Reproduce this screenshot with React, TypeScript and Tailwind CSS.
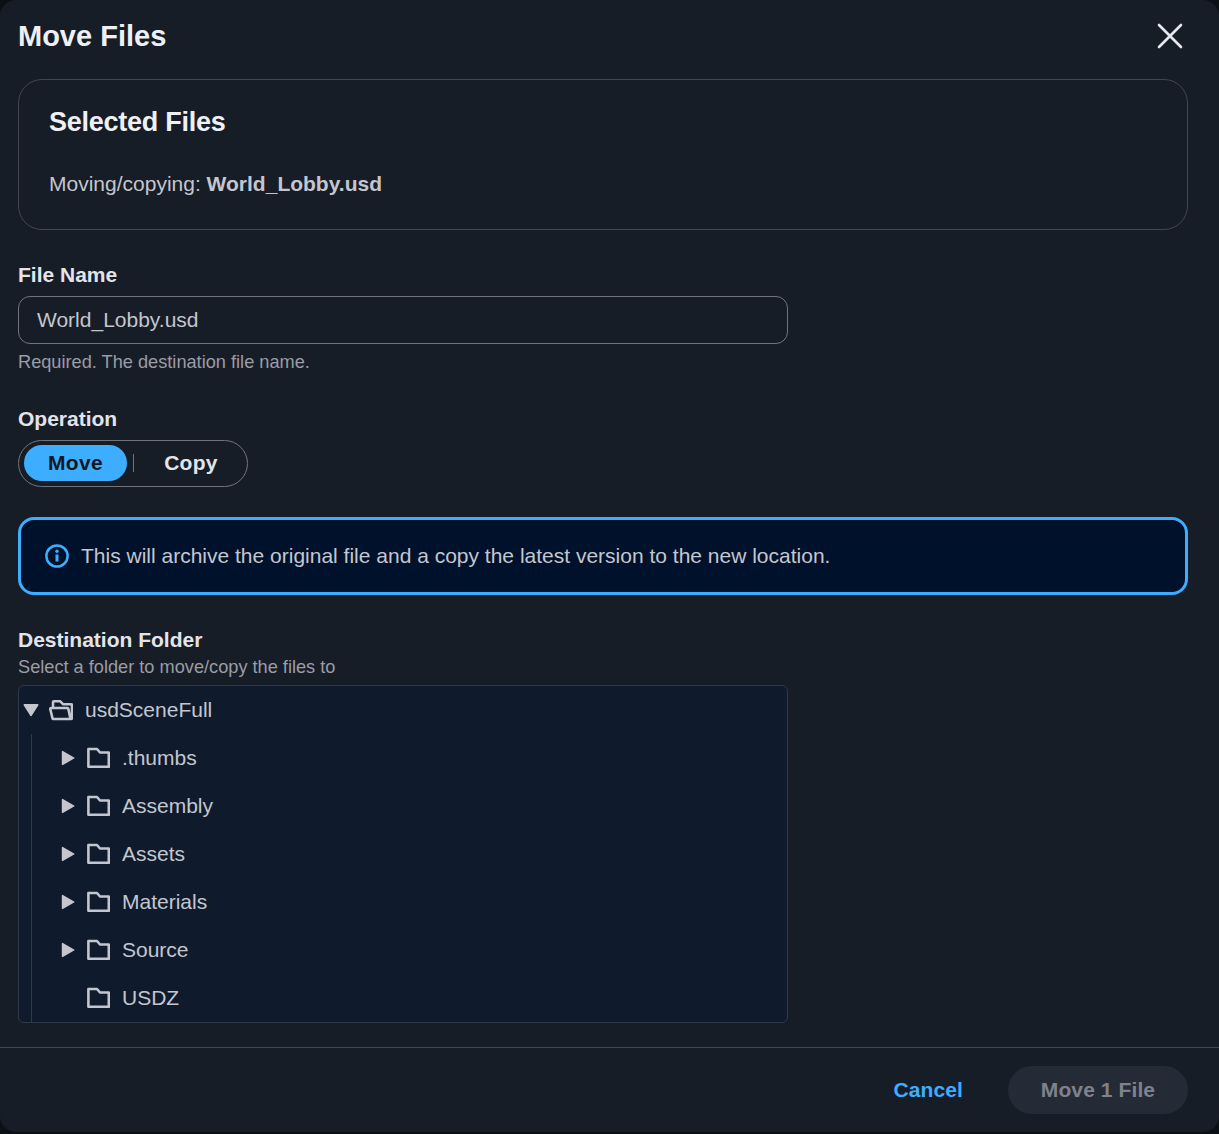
import React from "react";

function Folder() {
  return (
    <svg width="24" height="24" viewBox="0 0 24 24" fill="none" stroke="#c4c6cf" strokeWidth="2.600" strokeLinejoin="round" className="block shrink-0">
      <path d="M2.400 3H11L14 6.500H22.800V20.800H2.400z" />
    </svg>
  );
}

function FolderOpen() {
  return (
    <svg width="24" height="24" viewBox="0 0 24 24" fill="none" stroke="#c4c6cf" strokeWidth="2.600" strokeLinejoin="round" className="block shrink-0">
      <path d="M4 10V4.200a1 1 0 0 1 1-1h6l3 3h8a1 1 0 0 1 1 1V20a1 1 0 0 1-1 1H4.500a1 1 0 0 1-1-.8L1.300 11.300a1 1 0 0 1 1-1.300h16a1 1 0 0 1 1 .8L21.500 21" />
    </svg>
  );
}

function Row({ name, leaf }: { name: string; leaf?: boolean }) {
  return (
    <div className="h-12 flex items-center">
      <div className="w-[18px] ml-[40px] flex items-center justify-center">
        {!leaf && (
          <svg width="14" height="16" viewBox="0 0 14 16" className="block">
            <path d="M1.500 1.500L12.800 8L1.500 14.500z" fill="#c4c6cf" stroke="#c4c6cf" strokeWidth="1.400" strokeLinejoin="round" />
          </svg>
        )}
      </div>
      <div className="ml-[9px]"><Folder /></div>
      <span className="ml-[12px] text-[21px] leading-6 text-[#c4c6cf]">{name}</span>
    </div>
  );
}

export default function App() {
  return (
    <div className="w-[1219px] h-[1134px] bg-[#0b0f16] overflow-hidden font-['Liberation_Sans',Arial,sans-serif]">
      <div className="w-[1219px] h-[1132px] bg-[#171d27] rounded-[16px] flex flex-col">
        <div className="h-[71px] pl-[18px] pr-[35px] flex items-center justify-between">
          <h1 className="text-[29px] leading-9 font-bold text-[#eef0f6]">Move Files</h1>
          <svg width="28" height="28" viewBox="0 0 28 28" fill="none" stroke="#e6e7ee" strokeWidth="2.600" strokeLinecap="round">
            <path d="M3 3L25 25M25 3L3 25" />
          </svg>
        </div>
        <div className="flex-1 pl-[18px] pr-[31px] pt-[8px] flex flex-col">
          <div className="h-[151px] rounded-[24px] border border-[#43464f] pl-[30px] pt-[24px]">
            <h2 className="text-[27px] leading-9 font-bold text-[#eef0f6] tracking-[-0.25px]">Selected Files</h2>
            <p className="mt-[32px] text-[21px] leading-6 text-[#c4c6cf]">
              Moving/copying: <strong className="font-bold">World_Lobby.usd</strong>
            </p>
          </div>

          <label className="mt-[33px] text-[21px] leading-6 font-bold text-[#e3e4ea]">File Name</label>
          <div className="mt-[9px] w-[770px] h-12 rounded-[12px] border border-[#72747d] flex items-center pl-[18px] text-[21px] text-[#c4c6cf]">
            World_Lobby.usd
          </div>
          <p className="mt-[6px] text-[18.2px] leading-6 text-[#9a9ca6]">Required. The destination file name.</p>

          <label className="mt-[33px] text-[21px] leading-6 font-bold text-[#e3e4ea]">Operation</label>
          <div className="mt-[9px] w-[230px] h-[47px] rounded-full border border-[#72747d] flex items-center pl-[5px] pb-[2px]">
            <div className="w-[103px] h-[36px] rounded-full bg-[#3daeff] flex items-center justify-center text-[21px] font-bold tracking-[0.3px] text-[#13181f]">
              Move
            </div>
            <div className="ml-[6px] w-px h-[18px] bg-[#72747d]" />
            <div className="flex-1 flex items-center justify-center text-[21px] font-bold tracking-[0.3px] text-[#e3e4ea] pl-[1px]">
              Copy
            </div>
          </div>

          <div className="mt-[30px] h-[78px] rounded-[16px] border-[3px] border-[#3daeff] bg-[#00112c] flex items-center pl-[23px]">
            <svg width="26" height="26" viewBox="0 0 26 26" fill="none" className="shrink-0">
              <circle cx="13" cy="13" r="10.600" stroke="#3daeff" strokeWidth="2.500" />
              <path d="M13 11.500V18.500" stroke="#3daeff" strokeWidth="3" />
              <circle cx="13" cy="8.200" r="1.700" fill="#3daeff" />
            </svg>
            <span className="ml-[11px] text-[21px] leading-6 text-[#c4c6cf]">
              This will archive the original file and a copy the latest version to the new location.
            </span>
          </div>

          <label className="mt-[33px] text-[21px] leading-6 font-bold text-[#e3e4ea]">Destination Folder</label>
          <p className="mt-[3px] text-[18.2px] leading-6 text-[#9a9ca6]">Select a folder to move/copy the files to</p>
          <div className="mt-[6px] w-[770px] h-[338px] rounded-[6px] border border-[#2f3a49] bg-[#0f1b2c] overflow-hidden relative">
            <div className="h-12 flex items-center">
              <div className="w-[18px] ml-[3px] flex items-center justify-center">
                <svg width="16" height="14" viewBox="0 0 16 14" className="block">
                  <path d="M1.200 1.800H14.800L8 12.500z" fill="#c4c6cf" stroke="#c4c6cf" strokeWidth="1.400" strokeLinejoin="round" />
                </svg>
              </div>
              <div className="ml-[9px]"><FolderOpen /></div>
              <span className="ml-[12px] text-[21px] leading-6 text-[#c4c6cf]">usdSceneFull</span>
            </div>
            <div className="absolute left-[12px] top-[48px] bottom-0 w-px bg-[#2f3a49]" />
            <Row name=".thumbs" />
            <Row name="Assembly" />
            <Row name="Assets" />
            <Row name="Materials" />
            <Row name="Source" />
            <Row name="USDZ" leaf />
          </div>
        </div>
        <div className="h-[85px] border-t border-[#43464f] flex items-center justify-end pr-[31px]">
          <span className="text-[21px] font-bold text-[#3daeff] tracking-[0.1px]">Cancel</span>
          <div className="ml-[45px] w-[180px] h-12 rounded-full bg-[#252b36] flex items-center justify-center text-[21px] font-bold tracking-[0.1px] text-[#7f828b]">
            Move 1 File
          </div>
        </div>
      </div>
    </div>
  );
}
